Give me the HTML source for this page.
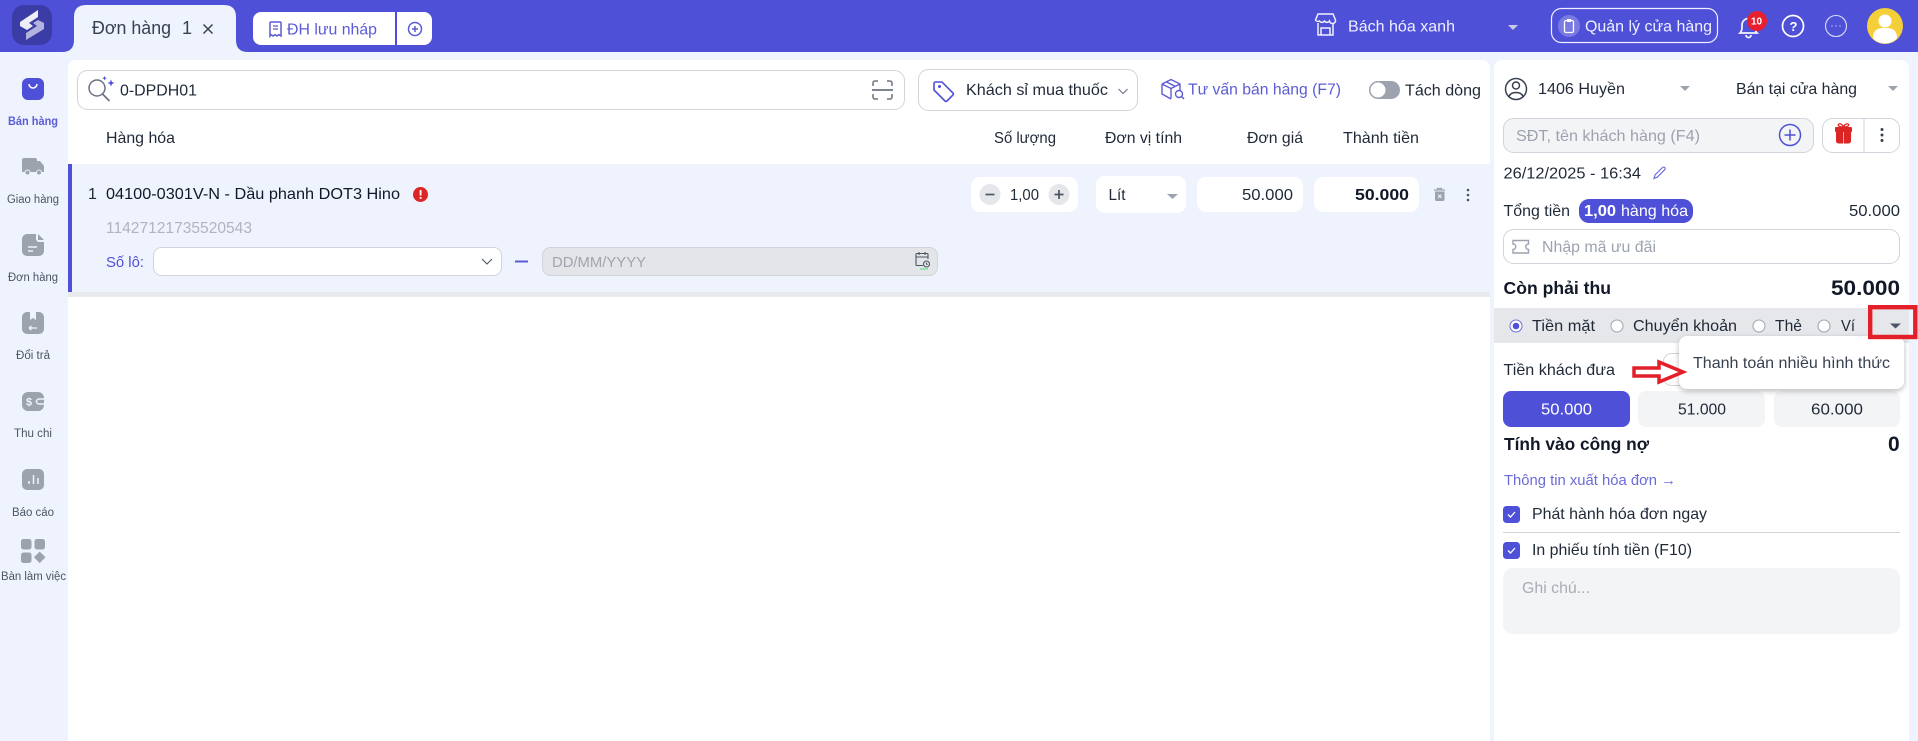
<!DOCTYPE html>
<html lang="vi"><head><meta charset="utf-8"><title>Đơn hàng</title>
<style>
html,body{margin:0;padding:0;width:1918px;height:741px;overflow:hidden;background:#eef3fe}
svg{display:block}
text{font-family:"Liberation Sans",sans-serif;font-size:16px;fill:#1f2937}
.s{font-size:11.500px;fill:#4b5563}
.b{font-weight:bold}
.p{fill:#5b5bd6}
.g{fill:#a3a7b0}
</style></head><body>
<svg xmlns="http://www.w3.org/2000/svg" width="1918" height="741" viewBox="0 0 1918 741">
<defs>
<filter id="sh" x="-20%" y="-30%" width="140%" height="170%"><feDropShadow dx="0" dy="2" stdDeviation="3" flood-color="#000" flood-opacity=".28"/></filter>
</defs>
<rect width="1918" height="741" fill="#eef3fe"/>
<!-- header -->
<rect width="1918" height="52" fill="#4f50d8"/>
<rect x="12" y="5" width="40" height="40" rx="12" fill="#3c3ca6"/>
<polygon points="20,22 38,10 38,17 29,23 33,26 27,30 20,26" fill="#eeeef8"/>
<polygon points="26,40 44,29 44,23 38,20 33,23 37,26 26,33" fill="#b3b3e0"/>
<path d="M62 52 q12 0 12-12 V17 q0-12 12-12 h138 q12 0 12 12 v23 q0 12 12 12 z" fill="#eef3fe"/>
<text x="92" y="34" textLength="79" lengthAdjust="spacingAndGlyphs" style="font-size:18px;fill:#374151">Đơn hàng</text>
<text x="182" y="34" style="font-size:18px;fill:#374151">1</text>
<path d="M203.500 24.500l9 9m0-9l-9 9" stroke="#374151" stroke-width="1.500" fill="none"/>
<path d="M261 12h134v33h-134a8 8 0 0 1-8-8v-17a8 8 0 0 1 8-8z" fill="#fff"/>
<path d="M397 12h27a8 8 0 0 1 8 8v17a8 8 0 0 1-8 8h-27z" fill="#fff"/>
<path d="M270 23a1 1 0 0 1 1-1h9a1 1 0 0 1 1 1v13l-2-1.300-2 1.300-2-1.300-2 1.300-2-1.300-1 1.300z" fill="none" stroke="#5b5bd6" stroke-width="1.500"/>
<path d="M273 26h5m-5 3h5" stroke="#5b5bd6" stroke-width="1.300"/>
<text class="p" x="287" y="34.500" textLength="90" lengthAdjust="spacingAndGlyphs">ĐH lưu nháp</text>
<circle cx="415" cy="29" r="6.500" fill="none" stroke="#5b5bd6" stroke-width="1.500"/>
<path d="M412 29h6m-3-3v6" stroke="#5b5bd6" stroke-width="1.500"/>
<!-- store -->
<g fill="none" stroke="#f0f0ff" stroke-width="1.500"><path d="M1318 14h15l2.500 6a3 3 0 0 1-6 1 3 3 0 0 1-5 0 3 3 0 0 1-5 0 3 3 0 0 1-4-1z"/><path d="M1318 23v12h15v-12m-12 12v-7h9v7"/></g>
<text x="1348" y="31.500" textLength="107" lengthAdjust="spacingAndGlyphs" style="fill:#eef0ff">Bách hóa xanh</text>
<polygon points="1508,25 1518,25 1513,30" fill="#c7cbe8"/>
<rect x="1551.500" y="8.500" width="166" height="34" rx="10" fill="none" stroke="#eef0ff" stroke-width="1.200"/>
<circle cx="1569" cy="26" r="11" fill="#7a7be2"/>
<rect x="1564.500" y="20.500" width="9" height="12" rx="1.500" fill="none" stroke="#fff" stroke-width="1.300"/><rect x="1567" y="19" width="4" height="3" fill="#fff"/>
<text x="1585" y="31.500" textLength="127" lengthAdjust="spacingAndGlyphs" style="fill:#eef0ff">Quản lý cửa hàng</text>
<path d="M1740 33c2-2 2-4 2-8a6.500 6.500 0 0 1 13 0c0 4 0 6 2 8z" fill="none" stroke="#f3f3ff" stroke-width="1.800"/><path d="M1746 35a2.500 2.500 0 0 0 5 0" fill="none" stroke="#f3f3ff" stroke-width="1.800"/>
<circle cx="1757" cy="21" r="10" fill="#e8202e"/>
<text x="1751" y="24.500" class="b" style="font-size:10px;fill:#fff">10</text>
<circle cx="1793" cy="26" r="10.500" fill="none" stroke="#fff" stroke-width="1.700"/>
<text x="1789.500" y="31" class="b" style="font-size:13px;fill:#fff">?</text>
<circle cx="1836" cy="26" r="10.500" fill="none" stroke="#dfe0f8" stroke-width="1.100"/>
<path d="M1831.500 26h1m3 0h1m3 0h1" stroke="#dfe0f8" stroke-width="1.200"/>
<circle cx="1885" cy="26" r="18" fill="#f5cf3a"/>
<circle cx="1885" cy="21" r="6.500" fill="#fff"/>
<path d="M1873 38c0-9 6-10 12-10s12 1 12 10c-3 4-8 5.500-12 5.500s-9-1.500-12-5.500z" fill="#fff"/>
<!-- sidebar -->
<rect x="22" y="78" width="22" height="22" rx="6" fill="#4f50d8"/>
<path d="M29 84a4 4 0 0 0 8 0" fill="none" stroke="#fff" stroke-width="1.500"/>
<text x="8" y="125" class="s b" textLength="50" lengthAdjust="spacingAndGlyphs" style="fill:#5b5bd6">Bán hàng</text>
<path d="M22 160a2 2 0 0 1 2-2h11a2 2 0 0 1 2 2v1h3l4 5v6h-22z" fill="#9ca3af"/><circle cx="27.500" cy="172.500" r="2.500" fill="#9ca3af" stroke="#eef3fe"/><circle cx="39" cy="172.500" r="2.500" fill="#9ca3af" stroke="#eef3fe"/>
<text x="7" y="203" class="s" textLength="52" lengthAdjust="spacingAndGlyphs">Giao hàng</text>
<path d="M29 234h7v5a3 3 0 0 0 3 3h5v9a5 5 0 0 1-5 5h-12a5 5 0 0 1-5-5v-12a5 5 0 0 1 5-5z" fill="#9ca3af"/><path d="M38 234l6 6h-6z" fill="#9ca3af"/><path d="M28 247h9m-9 4h5" stroke="#eef3fe" stroke-width="1.500"/>
<text x="8" y="281" class="s" textLength="50" lengthAdjust="spacingAndGlyphs">Đơn hàng</text>
<rect x="22" y="312" width="22" height="22" rx="5" fill="#9ca3af"/><path d="M30 312h6v8l-3-2-3 2z" fill="#eef3fe"/><path d="M29 328h8m-8 0l2.500-2m-2.500 2l2.500 2" stroke="#eef3fe" stroke-width="1.300" fill="none"/>
<text x="16" y="359" class="s" textLength="34" lengthAdjust="spacingAndGlyphs">Đổi trả</text>
<rect x="22" y="392" width="22" height="19" rx="6" fill="#9ca3af"/>
<text x="26" y="405.500" class="b" style="font-size:11px;fill:#eef3fe">$</text><path d="M44 399h-5a2.500 2.500 0 0 0 0 5h5" fill="none" stroke="#eef3fe" stroke-width="1.500"/>
<text x="14" y="437" class="s" textLength="38" lengthAdjust="spacingAndGlyphs">Thu chi</text>
<rect x="22" y="469" width="22" height="21" rx="5" fill="#9ca3af"/><path d="M29 484v-3m4.500 3v-9m4.500 9v-6" stroke="#eef3fe" stroke-width="1.500"/>
<text x="12" y="516" class="s" textLength="42" lengthAdjust="spacingAndGlyphs">Báo cáo</text>
<rect x="21" y="539" width="10.500" height="10.500" rx="2.500" fill="#9ca3af"/><rect x="34.500" y="539" width="10.500" height="10.500" rx="2.500" fill="#9ca3af"/><rect x="21" y="552.500" width="10.500" height="10.500" rx="2.500" fill="#9ca3af"/><path d="M39.700 551.500l5.800 5.800-5.800 5.800-5.800-5.800z" fill="#9ca3af"/>
<text x="1" y="580" class="s" textLength="65" lengthAdjust="spacingAndGlyphs">Bàn làm việc</text>
<!-- main panel -->
<path d="M76 60h1406a8 8 0 0 1 8 8v673h-1422v-673a8 8 0 0 1 8-8z" fill="#fff"/>
<rect x="77.500" y="70.500" width="827" height="39" rx="10" fill="#fff" stroke="#d1d5db"/>
<circle cx="97" cy="88" r="8" fill="none" stroke="#6b7280" stroke-width="1.500"/><path d="M102.500 94l7 7" stroke="#6b7280" stroke-width="1.700"/>
<path d="M111 79.500l1 2.500 2.500 1-2.500 1-1 2.500-1-2.500-2.500-1 2.500-1zM104.500 76l.7 1.500 1.500.7-1.500.7-.7 1.500-.7-1.500-1.500-.7 1.500-.7z" fill="#4f50d8"/>
<text x="120" y="95.500" textLength="77" lengthAdjust="spacingAndGlyphs">0-DPDH01</text>
<g fill="none" stroke="#6b7280" stroke-width="1.500"><path d="M873 86v-3a2 2 0 0 1 2-2h3m9 0h3a2 2 0 0 1 2 2v3m0 8v3a2 2 0 0 1-2 2h-3m-9 0h-3a2 2 0 0 1-2-2v-3"/><path d="M872 90h21" stroke-width="1.700"/></g>
<rect x="918.500" y="69.500" width="219" height="41" rx="10" fill="#fff" stroke="#d1d5db"/>
<path d="M934 83.500a1.500 1.500 0 0 1 1.500-1.500h6.500l11 11a1.500 1.500 0 0 1 0 2l-6 6a1.500 1.500 0 0 1-2 0l-11-11z" fill="none" stroke="#4f50d8" stroke-width="1.600"/><circle cx="939.500" cy="86.500" r="1.500" fill="#4f50d8"/>
<text x="966" y="95" textLength="142" lengthAdjust="spacingAndGlyphs">Khách sỉ mua thuốc</text>
<path d="M1118.500 89l4.500 4.500 4.500-4.500" fill="none" stroke="#6b7280" stroke-width="1.100"/>
<path d="M1162 84l9-4.500 9 4.500v7M1162 84v10l9 5M1162 84l9 4.500 9-4.500M1171 88.500v10M1166.500 82l9 4.500" fill="none" stroke="#5b5bd6" stroke-width="1.400"/>
<circle cx="1179" cy="94" r="3.500" fill="#fff" stroke="#5b5bd6" stroke-width="1.400"/><path d="M1181.500 96.500l2.500 2.500" stroke="#5b5bd6" stroke-width="1.400"/>
<text class="p" x="1188" y="94.500" textLength="153" lengthAdjust="spacingAndGlyphs">Tư vấn bán hàng (F7)</text>
<rect x="1369" y="81" width="31" height="18" rx="9" fill="#9ca3af"/><circle cx="1378" cy="90" r="7.500" fill="#fff"/>
<text x="1405" y="95.500" textLength="76" lengthAdjust="spacingAndGlyphs">Tách dòng</text>
<text x="106" y="143" textLength="69" lengthAdjust="spacingAndGlyphs">Hàng hóa</text>
<text x="994" y="143" textLength="62" lengthAdjust="spacingAndGlyphs">Số lượng</text>
<text x="1105" y="143" textLength="77" lengthAdjust="spacingAndGlyphs">Đơn vị tính</text>
<text x="1247" y="143" textLength="56" lengthAdjust="spacingAndGlyphs">Đơn giá</text>
<text x="1343" y="143" textLength="76" lengthAdjust="spacingAndGlyphs">Thành tiền</text>
<!-- row -->
<rect x="68" y="292" width="1422" height="5" fill="#e9eaed"/>
<rect x="68" y="164" width="1422" height="128" fill="#eef3fe"/>
<rect x="68" y="164" width="4" height="128" fill="#4f50d8"/>
<text x="88" y="199">1</text>
<text x="106" y="199" textLength="294" lengthAdjust="spacingAndGlyphs" style="fill:#111827">04100-0301V-N - Dầu phanh DOT3 Hino</text>
<circle cx="420.500" cy="194.500" r="7.500" fill="#dc2626"/><rect x="419.700" y="190" width="1.800" height="5.500" fill="#fff"/><rect x="419.700" y="197" width="1.800" height="1.800" fill="#fff"/>
<text class="g" x="106" y="233" textLength="146" lengthAdjust="spacingAndGlyphs" style="fill:#b0b4bc">11427121735520543</text>
<text class="p" x="106" y="267" textLength="38" lengthAdjust="spacingAndGlyphs" style="fill:#4f50d8;font-size:15px">Số lô:</text>
<rect x="153.500" y="247.500" width="348" height="28" rx="8" fill="#fff" stroke="#d1d5db"/>
<path d="M482 259l5 5 5-5" fill="none" stroke="#4b5563" stroke-width="1.100"/>
<rect x="515" y="260.500" width="13" height="2" fill="#5b5bd6"/>
<rect x="542.500" y="247.500" width="395" height="28" rx="8" fill="#e4e5e9" stroke="#d1d5db"/>
<text x="552" y="267" textLength="94" lengthAdjust="spacingAndGlyphs" style="fill:#a0a4ad;font-size:15px">DD/MM/YYYY</text>
<g fill="none" stroke="#4b5563" stroke-width="1.100"><path d="M928 259v-4.500a1 1 0 0 0-1-1h-10a1 1 0 0 0-1 1v10a1 1 0 0 0 1 1h6M916 257h12M919 252v3M925 252v3"/><circle cx="926.500" cy="264" r="3"/><path d="M926.500 262.500v1.500l1 .7"/></g><path d="M920 269h8" stroke="#4ade80"/>
<rect x="971" y="177" width="107" height="35" rx="9" fill="#fff"/>
<circle cx="990" cy="194.500" r="10.500" fill="#e5e7eb"/><path d="M985.500 194.500h9" stroke="#4b5563" stroke-width="1.700"/>
<text x="1010" y="200" textLength="29" lengthAdjust="spacingAndGlyphs">1,00</text>
<circle cx="1059" cy="194.500" r="10.500" fill="#e5e7eb"/><path d="M1054.500 194.500h9m-4.500-4.500v9" stroke="#4b5563" stroke-width="1.700"/>
<rect x="1096" y="176" width="90" height="37" rx="9" fill="#fff"/>
<text x="1108.500" y="200" textLength="17" lengthAdjust="spacingAndGlyphs">Lít</text>
<polygon points="1167,194 1178,194 1172.500,199" fill="#9ca3af"/>
<rect x="1197" y="177" width="106" height="35" rx="9" fill="#fff"/>
<text x="1242" y="200" textLength="51" lengthAdjust="spacingAndGlyphs">50.000</text>
<rect x="1314" y="177" width="105" height="35" rx="9" fill="#fff"/>
<text x="1355" y="200" class="b" textLength="54" lengthAdjust="spacingAndGlyphs" style="fill:#111827">50.000</text>
<path d="M1434 190h11M1437.500 190v-1.500h4v1.500" stroke="#9ca3af" stroke-width="1.300" fill="none"/><path d="M1435 191.500h9.500v8a1.500 1.500 0 0 1-1.500 1.500h-6.500a1.500 1.500 0 0 1-1.500-1.500z" fill="#9ca3af"/>
<path d="M1438 194.500l3.500 3.500m0-3.500l-3.500 3.500" stroke="#eef3fe" stroke-width="1"/>
<circle cx="1468" cy="190" r="1.300" fill="#4b5563"/><circle cx="1468" cy="195" r="1.300" fill="#4b5563"/><circle cx="1468" cy="200" r="1.300" fill="#4b5563"/>
<!-- right panel -->
<path d="M1502 60h399a8 8 0 0 1 8 8v673h-415v-673a8 8 0 0 1 8-8z" fill="#fff"/>
<circle cx="1516" cy="89" r="10.500" fill="none" stroke="#374151" stroke-width="1.500"/><circle cx="1516" cy="85.500" r="3.500" fill="none" stroke="#374151" stroke-width="1.500"/><path d="M1509 96.500c1-3 4-4 7-4s6 1 7 4" fill="none" stroke="#374151" stroke-width="1.500"/>
<text x="1538" y="94" textLength="87" lengthAdjust="spacingAndGlyphs">1406 Huyền</text>
<polygon points="1680,86 1690,86 1685,91" fill="#9ca3af"/>
<text x="1736" y="94" textLength="121" lengthAdjust="spacingAndGlyphs">Bán tại cửa hàng</text>
<polygon points="1888,86 1898,86 1893,91" fill="#9ca3af"/>
<rect x="1503.500" y="118.500" width="310" height="34" rx="10" fill="#f3f4f6" stroke="#d1d5db"/>
<text x="1516" y="141" textLength="184" lengthAdjust="spacingAndGlyphs" style="fill:#9ca3af">SĐT, tên khách hàng (F4)</text>
<circle cx="1790" cy="135" r="10.500" fill="none" stroke="#4f50d8" stroke-width="1.500"/><path d="M1784.500 135h11m-5.500-5.500v11" stroke="#4f50d8" stroke-width="1.500"/>
<rect x="1822.500" y="118.500" width="77" height="34" rx="10" fill="#fff" stroke="#d1d5db"/>
<path d="M1864 118.500v34" stroke="#d1d5db"/>
<rect x="1835" y="127" width="17" height="5" rx="1" fill="#dc2626"/><path d="M1836 132h7.200v11.500h-4.700a2.500 2.500 0 0 1-2.500-2.500zM1843.800 132h7.200v9a2.500 2.500 0 0 1-2.500 2.500h-4.700z" fill="#dc2626"/><path d="M1843.500 127c-1-3-4-4-5-2.500s2 2.500 5 2.500c3 0 6-1 5-2.500s-4-.5-5 2.500z" fill="none" stroke="#dc2626" stroke-width="1.300"/>
<circle cx="1882" cy="129.500" r="1.500" fill="#374151"/><circle cx="1882" cy="135" r="1.500" fill="#374151"/><circle cx="1882" cy="140.500" r="1.500" fill="#374151"/>
<text x="1503.500" y="178.500" textLength="137.500" lengthAdjust="spacingAndGlyphs">26/12/2025 - 16:34</text>
<path d="M1654 178.500l1-3.500 7.500-7.500a1.500 1.500 0 0 1 2.200 2.200l-7.500 7.500z" fill="none" stroke="#6f6fdc" stroke-width="1.200"/>
<text x="1503.500" y="216" textLength="66.500" lengthAdjust="spacingAndGlyphs">Tổng tiền</text>
<rect x="1579" y="199" width="114" height="24" rx="10" fill="#4f50d8"/>
<text x="1584" y="216" class="b" textLength="32" lengthAdjust="spacingAndGlyphs" style="fill:#fff">1,00</text>
<text x="1621" y="216" textLength="67" lengthAdjust="spacingAndGlyphs" style="fill:#fff">hàng hóa</text>
<text x="1849" y="216" textLength="51" lengthAdjust="spacingAndGlyphs">50.000</text>
<rect x="1503.500" y="229.500" width="396" height="34" rx="10" fill="#fff" stroke="#d1d5db"/>
<path d="M1513 240.500h15.500v3.500a2.500 2.500 0 0 0 0 5.500v3.500h-15.500v-3.500a2.500 2.500 0 0 0 0-5.500z" fill="none" stroke="#9ca3af" stroke-width="1.400"/>
<text x="1542" y="252" textLength="114" lengthAdjust="spacingAndGlyphs" style="fill:#9ca3af">Nhập mã ưu đãi</text>
<text x="1503.500" y="294" class="b" textLength="107.500" lengthAdjust="spacingAndGlyphs" style="font-size:17.500px;fill:#111827">Còn phải thu</text>
<text x="1831" y="295" class="b" textLength="69" lengthAdjust="spacingAndGlyphs" style="font-size:21px;fill:#111827">50.000</text>
<!-- payment -->
<rect x="1494" y="308" width="415" height="35" fill="#e5e7eb"/>
<circle cx="1516" cy="326" r="6" fill="#fff" stroke="#6f70dd" stroke-width="1"/><circle cx="1516" cy="326" r="3.300" fill="#4f50d8"/>
<text x="1532" y="331" textLength="63" lengthAdjust="spacingAndGlyphs">Tiền mặt</text>
<circle cx="1617" cy="326" r="6" fill="#fff" stroke="#9ca3af"/>
<text x="1633" y="331" textLength="104" lengthAdjust="spacingAndGlyphs">Chuyển khoản</text>
<circle cx="1759" cy="326" r="6" fill="#fff" stroke="#9ca3af"/>
<text x="1775" y="331" textLength="27" lengthAdjust="spacingAndGlyphs">Thẻ</text>
<circle cx="1824" cy="326" r="6" fill="#fff" stroke="#9ca3af"/>
<text x="1841" y="331" textLength="14" lengthAdjust="spacingAndGlyphs">Ví</text>
<polygon points="1890,323.500 1901,323.500 1895.500,328.500" fill="#4b5563"/>
<text x="1503.500" y="375" textLength="111.500" lengthAdjust="spacingAndGlyphs">Tiền khách đưa</text>
<rect x="1663.500" y="353.500" width="60" height="32" rx="8" fill="#fff" stroke="#d1d5db"/>
<rect x="1503" y="391" width="127" height="36" rx="8" fill="#4f50d8"/>
<text x="1541" y="414.500" textLength="51" lengthAdjust="spacingAndGlyphs" style="fill:#fff">50.000</text>
<rect x="1638" y="391" width="127" height="36" rx="8" fill="#f3f4f6"/>
<text x="1678" y="414.500" textLength="48" lengthAdjust="spacingAndGlyphs">51.000</text>
<rect x="1774" y="391" width="126" height="36" rx="8" fill="#f3f4f6"/>
<text x="1811" y="414.500" textLength="52" lengthAdjust="spacingAndGlyphs">60.000</text>
<rect x="1679" y="336" width="225" height="53" rx="8" fill="#fff" filter="url(#sh)"/>
<text x="1693" y="368" textLength="197" lengthAdjust="spacingAndGlyphs" style="fill:#374151">Thanh toán nhiều hình thức</text>
<path d="M1634 368h25v-6l24 10-24 10v-6h-25z" fill="#fff" stroke="#e3202a" stroke-width="3.500" stroke-linejoin="miter"/>
<rect x="1870.200" y="307.200" width="45.100" height="29.800" fill="none" stroke="#e3202a" stroke-width="4.400"/>
<text x="1504" y="450" class="b" textLength="145" lengthAdjust="spacingAndGlyphs" style="font-size:17.500px;fill:#111827">Tính vào công nợ</text>
<text x="1888" y="451" class="b" style="font-size:21px;fill:#111827">0</text>
<text x="1504" y="485" textLength="172" lengthAdjust="spacingAndGlyphs" style="font-size:15px;fill:#6b6bd8">Thông tin xuất hóa đơn →</text>
<rect x="1503" y="506" width="17" height="17" rx="3.500" fill="#4f50d8"/><path d="M1508 514.500l2.500 2.500 4.500-5" fill="none" stroke="#fff" stroke-width="1.300"/>
<text x="1532" y="519" textLength="175" lengthAdjust="spacingAndGlyphs">Phát hành hóa đơn ngay</text>
<rect x="1503" y="532" width="397" height="1" fill="#d1d5db"/>
<rect x="1503" y="542" width="17" height="17" rx="3.500" fill="#4f50d8"/><path d="M1508 550.500l2.500 2.500 4.500-5" fill="none" stroke="#fff" stroke-width="1.300"/>
<text x="1532" y="555" textLength="160" lengthAdjust="spacingAndGlyphs">In phiếu tính tiền (F10)</text>
<rect x="1503" y="568" width="397" height="66" rx="10" fill="#f3f4f6"/>
<text x="1522" y="593" textLength="68" lengthAdjust="spacingAndGlyphs" style="fill:#a8acb4">Ghi chú...</text>
</svg>
</body></html>
